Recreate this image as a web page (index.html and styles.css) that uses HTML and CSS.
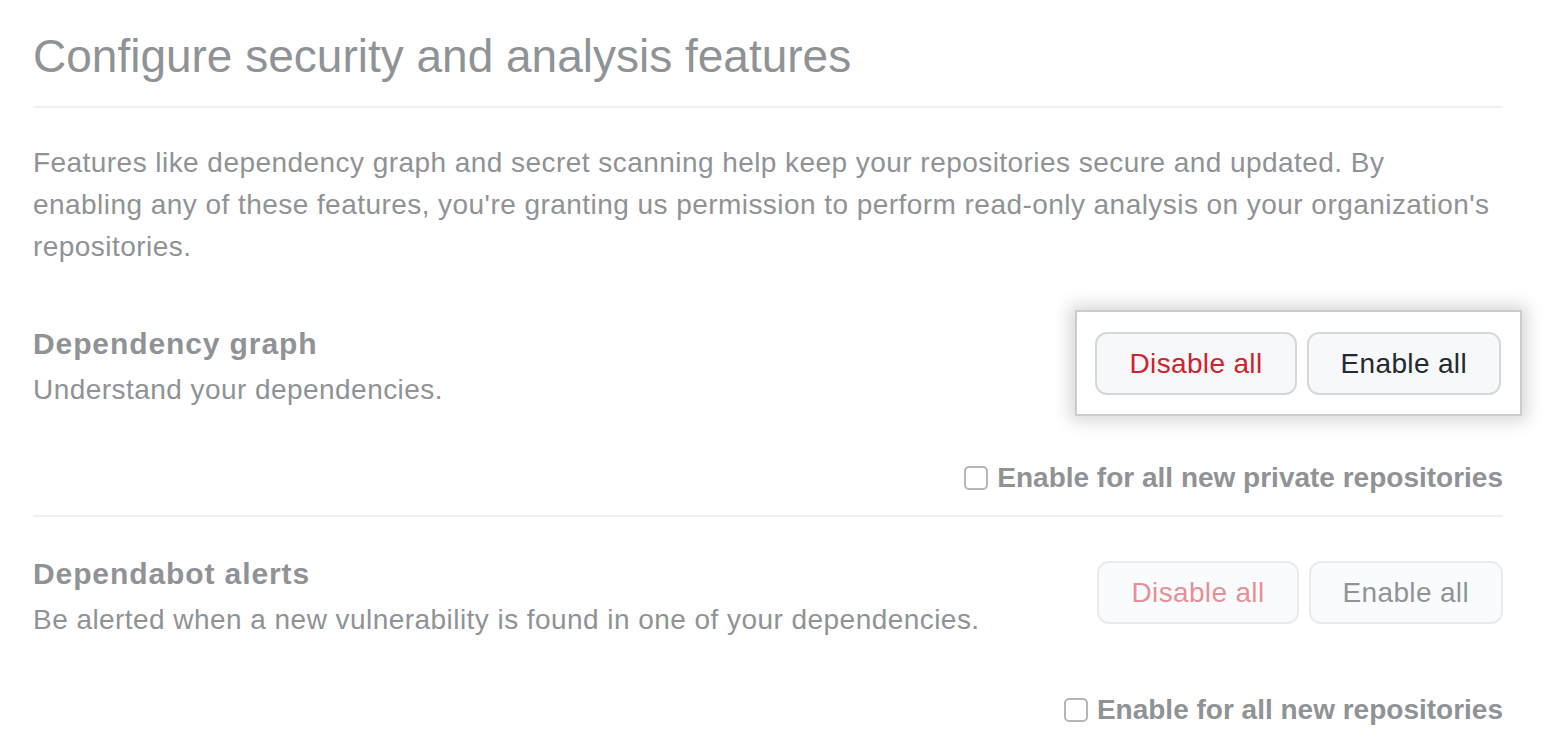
FILE: index.html
```html
<!DOCTYPE html>
<html>

<head>
  <meta charset="UTF-8" />
  <title>Security and analysis</title>

  <link rel="stylesheet" href="styles.css">
</head>

<body>
  <div class="page">
    <div class="page-title">Configure security and analysis features</div>
    <p class="intro">
      Features like dependency graph and secret scanning help keep your repositories secure and updated. By
      <br>enabling any of these features, you're granting us permission to perform read-only analysis on your organization's
      repositories.
    </p>

    <div class="feature">
      <div class="feature-row">
        <div class="feature-info">
          <div class="feature-title">Dependency graph</div>
          <div class="feature-desc">Understand your dependencies.</div>
        </div>
        <div class="btn-group highlight">
          <button class="btn btn-danger">Disable all</button>
          <button class="btn">Enable all</button>
        </div>
      </div>
      <label class="check-row">
        <span class="check-box"></span>
        Enable for all new private repositories
      </label>
    </div>

    <div class="feature">
      <div class="feature-row">
        <div class="feature-info">
          <div class="feature-title">Dependabot alerts</div>
          <div class="feature-desc">Be alerted when a new vulnerability is found in one of your dependencies.</div>
        </div>
        <div class="btn-group faded">
          <button class="btn btn-danger">Disable all</button>
          <button class="btn">Enable all</button>
        </div>
      </div>
      <label class="check-row">
        <span class="check-box"></span>
        Enable for all new repositories
      </label>
    </div>
  </div>
</body>

</html>
```

FILE: styles.css
```css
body {
  margin: 0;
  background: #fff;
  font-family: "Liberation Sans", Arial, sans-serif;
  color: #8f9396;
}

.page {
  width: 1470px;
  margin-left: 33px;
  padding-top: 28px;
}

.page-title {
  font-size: 46px;
  line-height: 56px;
  padding-bottom: 22px;
  border-bottom: 2px solid #f0f0f0;
}

.intro {
  font-size: 28px;
  line-height: 42px;
  letter-spacing: 0.45px;
  margin: 34px 0 20px;
}

.feature {
  padding: 36px 0 17px;
  border-bottom: 2px solid #f0f0f0;

  &:last-child {
    border-bottom: 0;
    padding-top: 37px;
  }
}

.feature-row {
  display: flex;
  justify-content: space-between;
  align-items: flex-start;
}

.feature-title {
  font-size: 30px;
  font-weight: bold;
  line-height: 40px;
  letter-spacing: 0.9px;
}

.feature-desc {
  font-size: 28px;
  line-height: 42px;
  letter-spacing: 0.45px;
  margin-top: 5px;
}

.btn-group {
  display: flex;
  gap: 10px;
  margin-top: 7px;
}

.highlight {
  background: #fff;
  padding: 20px 19px 19px 18px;
  margin: -14px -19px -20px 0;
  border: 2px solid #cccccc;
  box-shadow: 0 0 16px 5px rgba(0, 0, 0, 0.16);
}

.faded {
  opacity: 0.5;
}

.btn {
  font-family: inherit;
  font-size: 28px;
  line-height: 40px;
  letter-spacing: 0.35px;
  padding: 9.5px 32px;
  border: 2px solid #d5d8da;
  border-radius: 12px;
  background: #f6f8fa;
  color: #24292f;
}

.btn-danger {
  color: #cf222e;
}

.check-row {
  display: flex;
  justify-content: flex-end;
  align-items: center;
  gap: 9px;
  margin-top: 47px;
  font-size: 28px;
  font-weight: bold;
  line-height: 40px;
}

.feature:last-child .check-row {
  margin-top: 49px;
}

.check-box {
  width: 20px;
  height: 20px;
  border: 2px solid #b4b6b8;
  border-radius: 5px;
  background: #fff;
}
```
